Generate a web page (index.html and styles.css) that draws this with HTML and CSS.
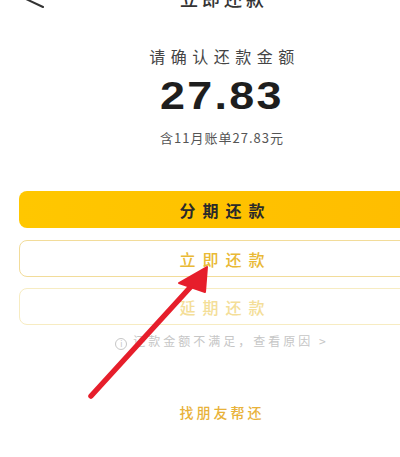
FILE: index.html
```html
<!DOCTYPE html>
<html>
<head>
    <meta charset="utf-8">
    <title>立即还款</title>
    <link rel="stylesheet" href="styles.css">
</head>
<body>
    <div class="screen">
        <div class="nav-bar">
            <svg class="back" width="22" height="12" viewBox="0 0 22 12">
                <polyline points="19,-9 2,-1 19,7" fill="none" stroke="#333" stroke-width="2" stroke-linecap="round" stroke-linejoin="round"/>
            </svg>
            <div class="nav-title">立即还款</div>
            <div></div>
        </div>

        <div class="amount-block">
            <p class="amount-label">请确认还款金额</p>
            <p class="amount"><span>27.83</span></p>
            <p class="amount-note">含11月账单27.83元</p>
        </div>

        <div class="actions">
            <button class="btn btn-primary">分期还款</button>
            <button class="btn btn-outline">立即还款</button>
            <button class="btn btn-outline btn-faded">延期还款</button>
        </div>

        <p class="hint"><span class="hint-icon">i</span>还款金额不满足，查看原因 &gt;</p>

        <p class="friend">找朋友帮还</p>

        <!-- 标注箭头 -->
        <svg class="mark-arrow" width="444" height="457" viewBox="0 0 444 457">
            <line x1="91" y1="396" x2="196" y2="281" stroke="#e61e2b" stroke-width="5.5" stroke-linecap="round"/>
            <polygon points="207,267 179,283 205,292" fill="#e61e2b" stroke="#e61e2b" stroke-width="2" stroke-linejoin="round"/>
        </svg>
    </div>
</body>
</html>
```

FILE: styles.css
```css
html, body {
    margin: 0;
    padding: 0;
    background: #fff;
    overflow: hidden;
}
body {
    font-family: "Noto Sans CJK SC", "Noto Sans", sans-serif;
    width: 400px;
    height: 457px;
}
p {
    margin: 0;
}
.screen {
    position: relative;
    display: flow-root;
    width: 444px;
    height: 457px;
}
.nav-bar {
    display: grid;
    grid-template-columns: 1fr auto 1fr;
    grid-template-rows: 44px;
    align-items: center;
    height: 44px;
    margin-top: -24px;
}
.back {
    align-self: start;
    margin-left: 24px;
    margin-top: 24px;
}
.nav-title {
    font-size: 18px;
    font-weight: 500;
    color: #333;
    letter-spacing: 4px;
    padding-left: 4px;
}
.amount-block {
    text-align: center;
}
.amount-label {
    margin-top: 25px;
    font-size: 16px;
    line-height: 22px;
    color: #444;
    letter-spacing: 5.5px;
    padding-left: 5px;
}
.amount {
    margin-top: 5px;
    font-family: "Liberation Sans", Arial, sans-serif;
    font-size: 39px;
    font-weight: 700;
    line-height: 48px;
    color: #1e1e1e;
}
.amount span {
    display: inline-block;
    letter-spacing: 2px;
    transform: scaleX(1.15);
}
.amount-note {
    margin-top: 8px;
    font-size: 13px;
    line-height: 20px;
    color: #555;
    letter-spacing: 1px;
}
.actions {
    margin-top: 43px;
    padding: 0 19px;
    display: flex;
    flex-direction: column;
    gap: 12px;
}
.btn {
    height: 37px;
    border-radius: 8px;
    font-family: "Noto Sans CJK SC", sans-serif;
    font-size: 16px;
    font-weight: 700;
    letter-spacing: 7px;
    padding: 0 0 0 7px;
    cursor: pointer;
}
.btn-primary {
    border: none;
    color: #2a2a2a;
    background: linear-gradient(90deg, #ffc700, #ffbd00);
}
.btn-outline {
    background: #fff;
    border: 1.5px solid #f2dc9a;
    color: #e9b935;
    font-weight: 500;
}
.btn-faded {
    border-color: #f7ecc2;
    color: #f4de98;
    margin-top: -1px;
}
.hint {
    margin-top: 7px;
    text-align: center;
    font-size: 12px;
    line-height: 18px;
    color: #c6c6c6;
    letter-spacing: 3px;
}
.hint-icon {
    display: inline-block;
    width: 10px;
    height: 10px;
    line-height: 10px;
    border: 1px solid #c6c6c6;
    border-radius: 50%;
    font-size: 8px;
    letter-spacing: 0;
    text-align: center;
    margin-right: 6px;
    vertical-align: -1px;
}
.friend {
    margin-top: 52px;
    text-align: center;
    font-size: 14px;
    line-height: 20px;
    color: #e8b23a;
    font-weight: 500;
    letter-spacing: 3px;
}
.mark-arrow {
    position: absolute;
    top: 0;
    left: 0;
    pointer-events: none;
}
```
